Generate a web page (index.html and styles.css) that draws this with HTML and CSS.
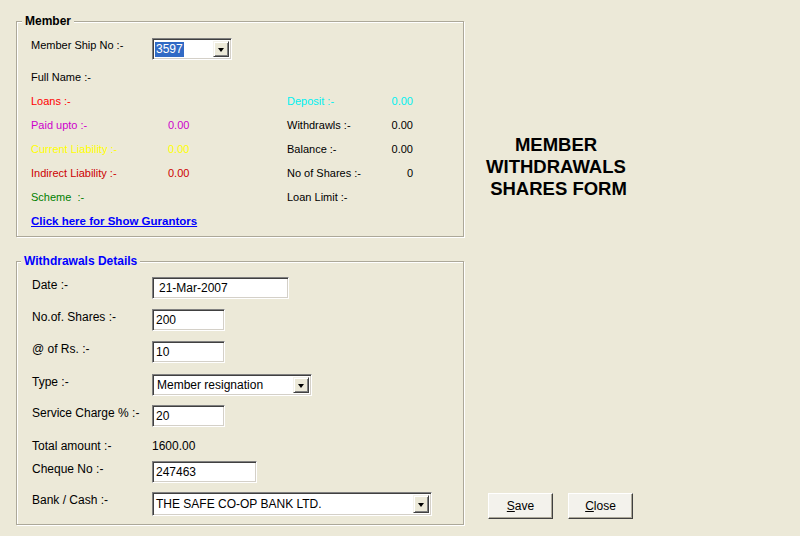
FILE: index.html
```html
<!DOCTYPE html>
<html>
<head>
<meta charset="utf-8">
<link rel="stylesheet" href="styles.css">
</head>
<body>
<div class="page">
  <div class="left">
    <div class="group member">
      <span class="legend">Member</span>
      <div class="mrow1">
        <span class="mlabel">Member Ship No :-</span>
        <div class="field combo w80">
          <span class="combo-text"><span class="sel">3597</span></span>
          <span class="dd"><span class="arrow"></span></span>
        </div>
      </div>
      <div class="mgrid">
        <span class="c1">Full Name :-</span><span></span><span></span><span></span>
        <span class="c1 red">Loans :-</span><span></span><span class="cyan">Deposit :-</span><span class="num cyan">0.00</span>
        <span class="c1 magenta">Paid upto :-</span><span class="magenta">0.00</span><span>Withdrawls :-</span><span class="num">0.00</span>
        <span class="c1 yellow">Current Liability :-</span><span class="yellow">0.00</span><span>Balance :-</span><span class="num">0.00</span>
        <span class="c1 dred">Indirect Liability :-</span><span class="dred">0.00</span><span>No of Shares :-</span><span class="num">0</span>
        <span class="c1 green">Scheme &nbsp;:-</span><span></span><span>Loan Limit :-</span><span></span>
        <a class="link" href="#">Click here for Show Gurantors</a>
      </div>
    </div>

    <div class="group withdraw">
      <span class="legend blue">Withdrawals Details</span>
      <div class="wrow h32"><span class="wlabel">Date :-</span><div class="field w137 pad5">21-Mar-2007</div></div>
      <div class="wrow h32"><span class="wlabel">No.of. Shares :-</span><div class="field w73">200</div></div>
      <div class="wrow h33"><span class="wlabel">@ of Rs. :-</span><div class="field w73">10</div></div>
      <div class="wrow h31"><span class="wlabel">Type :-</span>
        <div class="field combo w160"><span class="combo-text pad3">Member resignation</span><span class="dd"><span class="arrow"></span></span></div>
      </div>
      <div class="wrow h33"><span class="wlabel">Service Charge % :-</span><div class="field w73">20</div></div>
      <div class="wrow h23"><span class="wlabel">Total amount :-</span><span class="wvalue">1600.00</span></div>
      <div class="wrow h31"><span class="wlabel">Cheque No :-</span><div class="field w105">247463</div></div>
      <div class="wrow h23"><span class="wlabel">Bank / Cash :-</span>
        <div class="field combo w280 tall"><span class="combo-text pad2">THE SAFE CO-OP BANK LTD.</span><span class="dd"><span class="arrow"></span></span></div>
      </div>
    </div>
  </div>

  <div class="right">
    <div class="title">
      <span class="tline">MEMBER</span>
      <span class="tline">WITHDRAWALS</span>
      <span class="tline shift">SHARES FORM</span>
    </div>
    <div class="buttons">
      <button class="btn"><u>S</u>ave</button>
      <button class="btn"><u>C</u>lose</button>
    </div>
  </div>
</div>
</body>
</html>
```

FILE: styles.css
```css
html, body {
  margin: 0;
  padding: 0;
  background: #ece9d8;
}
body {
  font-family: "Liberation Sans", Arial, sans-serif;
  color: #000;
  width: 800px;
  height: 536px;
  overflow: hidden;
}
.page {
  display: flex;
  height: 536px;
}
.left {
  width: 464px;
  padding-left: 16px;
  box-sizing: border-box;
}
.group {
  position: relative;
  width: 448px;
  box-sizing: border-box;
  border: 1px solid #aca899;
  box-shadow: 1px 1px 0 #fff, inset 1px 1px 0 #fff;
}
.legend {
  position: absolute;
  top: -8px;
  left: 5px;
  padding: 0 3px;
  background: #ece9d8;
  font-size: 12px;
  line-height: 14px;
  font-weight: bold;
}
.legend.blue {
  color: #0000ff;
  left: 4px;
}
.member {
  margin-top: 21px;
  padding: 16px 0 3px 14px;
  font-size: 11px;
  line-height: 13px;
}
.mrow1 {
  display: flex;
  height: 22px;
}
.mlabel {
  width: 121px;
  padding-top: 1px;
}
.mgrid {
  margin-top: 5px;
  display: grid;
  grid-template-columns: 137px 119px 80px 46px;
  grid-auto-rows: 24px;
  align-items: center;
}
.num { text-align: right; }
.red { color: #ff0000; }
.dred { color: #cc0000; }
.cyan { color: #00f0f0; }
.magenta { color: #cc00cc; }
.yellow { color: #ffff00; }
.green { color: #008000; }
.link {
  grid-column: 1 / 5;
  color: #0000ff;
  font-weight: bold;
  font-size: 11.5px;
  text-decoration: underline;
}

.withdraw {
  margin-top: 24px;
  padding: 15px 0 9px 15px;
  font-size: 12px;
  line-height: 14px;
}
.wrow {
  display: flex;
  align-items: flex-start;
}
.h23 { height: 23px; }
.h31 { height: 31px; }
.h32 { height: 32px; }
.h33 { height: 33px; }
.wlabel {
  width: 120px;
  padding-top: 1px;
}
.wvalue {
  padding-top: 1px;
}

.field {
  box-sizing: border-box;
  height: 22px;
  background: #fff;
  border-top: 1px solid #808080;
  border-left: 1px solid #808080;
  border-bottom: 1px solid #fff;
  border-right: 1px solid #fff;
  box-shadow: inset 1px 1px 0 #404040, inset -1px -1px 0 #d4d0c8;
  font-size: 12px;
  line-height: 20px;
  padding-left: 3px;
  white-space: nowrap;
}
.field.tall { height: 24px; }
.pad5 { padding-left: 6px; }
.w73 { width: 73px; }
.w80 { width: 80px; }
.w105 { width: 105px; }
.w137 { width: 137px; }
.w160 { width: 160px; }
.w280 { width: 280px; }

.combo {
  display: flex;
  align-items: center;
  padding: 2px 2px 2px 2px;
}
.combo-text {
  flex: 1;
  line-height: 16px;
}
.pad3 { padding-left: 2px; }
.pad2 { padding-left: 1px; }
.sel {
  display: inline-block;
  background: #316ac5;
  color: #fff;
  padding: 0 1px;
  line-height: 15px;
  font-size: 12px;
}
.dd {
  box-sizing: border-box;
  width: 16px;
  height: 100%;
  background: #ece9d8;
  border-top: 1px solid #f4f2ea;
  border-left: 1px solid #f4f2ea;
  border-right: 1px solid #404040;
  border-bottom: 1px solid #404040;
  box-shadow: inset 1px 1px 0 #fff, inset -1px -1px 0 #808080;
  display: flex;
  align-items: center;
  justify-content: center;
}
.arrow {
  width: 0;
  height: 0;
  border-left: 3.5px solid transparent;
  border-right: 3.5px solid transparent;
  border-top: 4px solid #000;
  margin-top: 1px;
}

.right {
  width: 336px;
  display: flex;
  flex-direction: column;
  padding-top: 134px;
  padding-bottom: 17px;
  box-sizing: border-box;
}
.title {
  width: 184px;
  text-align: center;
  font-weight: bold;
  font-size: 18.5px;
  line-height: 22px;
}
.tline { display: block; }
.tline.shift { padding-left: 5px; }
.buttons {
  margin-top: auto;
  padding-left: 24px;
  display: flex;
  gap: 15px;
}
.btn {
  box-sizing: border-box;
  width: 65px;
  height: 26px;
  margin: 0;
  padding: 0;
  font-family: "Liberation Sans", Arial, sans-serif;
  font-size: 12px;
  color: #000;
  background: #f3f2ec;
  border-top: 1px solid #fff;
  border-left: 1px solid #fff;
  border-right: 1px solid #404040;
  border-bottom: 1px solid #404040;
  box-shadow: inset -1px -1px 0 #aca899;
}
.btn u { text-decoration: underline; }
```
